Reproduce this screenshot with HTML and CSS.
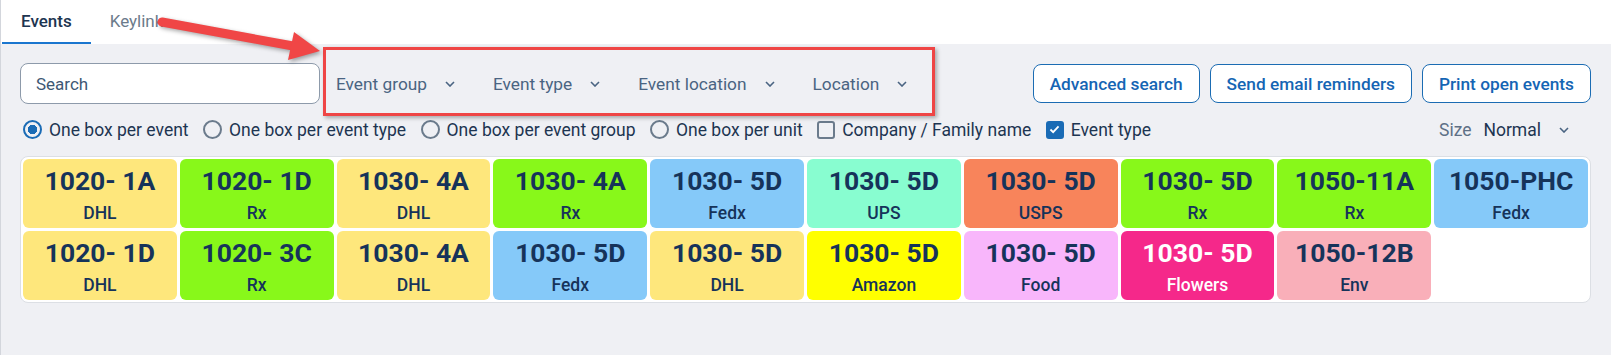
FILE: index.html
```html
<!DOCTYPE html>
<html lang="en">
<head>
    <meta charset="UTF-8">
    <title>Events</title>
    <link rel="stylesheet" href="styles.css">
</head>
<body>
    <div class="page">
        <nav class="tabs">
            <a class="tab active">Events</a>
            <a class="tab">Keylink</a>
        </nav>

        <main class="content">
            <div class="toolbar">
                <input type="text" class="search" placeholder="Search">
                <div class="filters">
                    <div class="select"><span>Event group</span><svg class="chev" viewBox="0 0 10 6"><path d="M1 1l4 4 4-4"/></svg></div>
                    <div class="select"><span>Event type</span><svg class="chev" viewBox="0 0 10 6"><path d="M1 1l4 4 4-4"/></svg></div>
                    <div class="select"><span>Event location</span><svg class="chev" viewBox="0 0 10 6"><path d="M1 1l4 4 4-4"/></svg></div>
                    <div class="select"><span>Location</span><svg class="chev" viewBox="0 0 10 6"><path d="M1 1l4 4 4-4"/></svg></div>
                </div>
                <div class="actions">
                    <button type="button">Advanced search</button>
                    <button type="button">Send email reminders</button>
                    <button type="button">Print open events</button>
                </div>
            </div>

            <div class="options">
                <label class="opt"><span class="radio checked"></span>One box per event</label>
                <label class="opt"><span class="radio"></span>One box per event type</label>
                <label class="opt"><span class="radio"></span>One box per event group</label>
                <label class="opt"><span class="radio"></span>One box per unit</label>
                <label class="opt"><span class="check"></span>Company / Family name</label>
                <label class="opt"><span class="check checked"><svg viewBox="0 0 12 10"><path d="M1.5 5l3 3 6-6.5"/></svg></span>Event type</label>
                <div class="size">
                    <span class="size-label">Size</span>
                    <span class="size-value">Normal</span>
                    <svg class="chev" viewBox="0 0 10 6"><path d="M1 1l4 4 4-4"/></svg>
                </div>
            </div>

            <div class="board">
                <div class="cell dhl"><div class="unit">1020- 1A</div><div class="kind">DHL</div></div>
                <div class="cell rx"><div class="unit">1020- 1D</div><div class="kind">Rx</div></div>
                <div class="cell dhl"><div class="unit">1030- 4A</div><div class="kind">DHL</div></div>
                <div class="cell rx"><div class="unit">1030- 4A</div><div class="kind">Rx</div></div>
                <div class="cell fedx"><div class="unit">1030- 5D</div><div class="kind">Fedx</div></div>
                <div class="cell ups"><div class="unit">1030- 5D</div><div class="kind">UPS</div></div>
                <div class="cell usps"><div class="unit">1030- 5D</div><div class="kind">USPS</div></div>
                <div class="cell rx"><div class="unit">1030- 5D</div><div class="kind">Rx</div></div>
                <div class="cell rx"><div class="unit">1050-11A</div><div class="kind">Rx</div></div>
                <div class="cell fedx"><div class="unit">1050-PHC</div><div class="kind">Fedx</div></div>

                <div class="cell dhl"><div class="unit">1020- 1D</div><div class="kind">DHL</div></div>
                <div class="cell rx"><div class="unit">1020- 3C</div><div class="kind">Rx</div></div>
                <div class="cell dhl"><div class="unit">1030- 4A</div><div class="kind">DHL</div></div>
                <div class="cell fedx"><div class="unit">1030- 5D</div><div class="kind">Fedx</div></div>
                <div class="cell dhl"><div class="unit">1030- 5D</div><div class="kind">DHL</div></div>
                <div class="cell amazon"><div class="unit">1030- 5D</div><div class="kind">Amazon</div></div>
                <div class="cell food"><div class="unit">1030- 5D</div><div class="kind">Food</div></div>
                <div class="cell flowers"><div class="unit">1030- 5D</div><div class="kind">Flowers</div></div>
                <div class="cell env"><div class="unit">1050-12B</div><div class="kind">Env</div></div>
            </div>
        </main>

        <!-- annotation overlay -->
        <div class="callout"></div>
        <svg class="arrow" viewBox="0 0 340 70" width="340" height="70">
            <line x1="161" y1="22" x2="292" y2="46" />
            <polygon points="287,60 293,32 319,51" />
        </svg>
    </div>
</body>
</html>
```

FILE: styles.css
```css
body {
    margin: 0;
    background-color: #eff0f4;
    font-family: Roboto, "Noto Sans", Arial, sans-serif;
    color: #1d3551;
}
.page {
    position: relative;
    min-height: 100vh;
    border-left: 1px solid #d3d6dc;
}

/* tabs */
.tabs {
    display: flex;
    height: 44px;
    padding-left: 1px;
    background: white;
}
.tab {
    padding: 0 19px;
    line-height: 42px;
    font-size: 17px;
    color: #6c7b8b;
    border-bottom: 2px solid transparent;
}
.tab.active {
    color: #1d3551;
    font-weight: 500;
    border-bottom-color: #1a76cf;
}

.content {
    padding: 19px 20px 0 19px;
}

/* toolbar */
.toolbar {
    display: flex;
    align-items: center;
    height: 41px;
}
.search {
    box-sizing: border-box;
    width: 300px;
    height: 41px;
    padding: 0 15px;
    border: 1px solid #8d9aaa;
    border-radius: 8px;
    font-family: inherit;
    font-size: 17px;
    background: white;
}
.search::placeholder {
    color: #3e5874;
}
.filters {
    display: flex;
    gap: 38px;
    margin-left: 16px;
}
.select {
    display: flex;
    align-items: center;
    gap: 18px;
    font-size: 17.3px;
    color: #4a6482;
}
.chev {
    width: 10px;
    height: 6px;
    fill: none;
    stroke: #4a6482;
    stroke-width: 1.6;
}
.actions {
    display: flex;
    gap: 10px;
    margin-left: auto;
}
button {
    height: 39px;
    padding: 0 16px;
    background: white;
    border: 1px solid #1b6cb3;
    border-radius: 8px;
    font-family: inherit;
    font-size: 17.3px;
    font-weight: 500;
    color: #1565b4;
}

/* view options */
.options {
    display: flex;
    align-items: center;
    height: 25px;
    margin-top: 13px;
    padding-left: 3px;
    font-size: 17.5px;
}
.opt {
    display: flex;
    align-items: center;
    gap: 7px;
    margin-right: 14.5px;
}
.radio {
    box-sizing: border-box;
    width: 19px;
    height: 19px;
    border: 2px solid #6b7b8c;
    border-radius: 50%;
}
.radio.checked {
    border-color: #1a6bb5;
    background: radial-gradient(circle, #1a6bb5 4.5px, transparent 5px);
}
.check {
    box-sizing: border-box;
    display: flex;
    align-items: center;
    justify-content: center;
    width: 18px;
    height: 18px;
    border: 2px solid #6b7b8c;
    border-radius: 3px;
}
.check.checked {
    background: #1a6bb5;
    border-color: #1a6bb5;
}
.check svg {
    width: 11px;
    height: 9px;
    fill: none;
    stroke: white;
    stroke-width: 2;
}
.size {
    display: flex;
    align-items: center;
    margin-left: auto;
    margin-right: 22px;
    font-size: 17.5px;
}
.size-label {
    color: #5e7086;
    margin-right: 12px;
}
.size-value {
    margin-right: 18px;
}

/* event boxes */
.board {
    display: grid;
    grid-template-columns: repeat(10, 1fr);
    grid-auto-rows: 69px;
    gap: 3px;
    margin-top: 14px;
    padding: 2px;
    background: white;
    border: 1px solid #dcdfe4;
    border-radius: 8px;
}
.cell {
    display: flex;
    flex-direction: column;
    align-items: center;
    padding-top: 6px;
    border-radius: 6px;
    color: #16335a;
}
.unit {
    font-size: 26.5px;
    font-weight: 700;
    line-height: 32px;
}
.kind {
    margin-top: 5px;
    font-size: 17.5px;
    font-weight: 500;
    line-height: 22px;
}
.dhl { background: #fee77c; }
.rx { background: #88f81a; }
.fedx { background: #85c9f9; }
.ups { background: #88fdd0; }
.usps { background: #f8845b; }
.amazon { background: #ffff00; }
.food { background: #f8b6fb; }
.flowers { background: #f5288a; color: white; }
.env { background: #f9afb9; }

/* annotation */
.callout {
    position: absolute;
    left: 322px;
    top: 47px;
    width: 612px;
    height: 69px;
    box-sizing: border-box;
    border: 3px solid #ef4545;
    box-shadow: 2px 2px 4px rgba(0, 0, 0, 0.3);
}
.arrow {
    position: absolute;
    left: 0;
    top: 0;
    filter: drop-shadow(2px 2px 2px rgba(0, 0, 0, 0.35));
}
.arrow line {
    stroke: #f04646;
    stroke-width: 9;
    stroke-linecap: round;
}
.arrow polygon {
    fill: #f04646;
}
```
